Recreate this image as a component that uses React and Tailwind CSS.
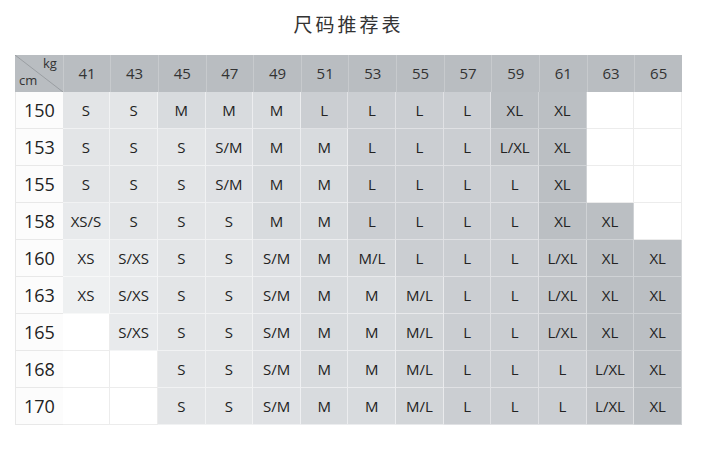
import React from "react";

const cols = [41, 43, 45, 47, 49, 51, 53, 55, 57, 59, 61, 63, 65];
const rows = [
  [150, ["S", "S", "M", "M", "M", "L", "L", "L", "L", "XL", "XL", "", ""]],
  [153, ["S", "S", "S", "S/M", "M", "M", "L", "L", "L", "L/XL", "XL", "", ""]],
  [155, ["S", "S", "S", "S/M", "M", "M", "L", "L", "L", "L", "XL", "", ""]],
  [158, ["XS/S", "S", "S", "S", "M", "M", "L", "L", "L", "L", "XL", "XL", ""]],
  [160, ["XS", "S/XS", "S", "S", "S/M", "M", "M/L", "L", "L", "L", "L/XL", "XL", "XL"]],
  [163, ["XS", "S/XS", "S", "S", "S/M", "M", "M", "M/L", "L", "L", "L/XL", "XL", "XL"]],
  [165, ["", "S/XS", "S", "S", "S/M", "M", "M", "M/L", "L", "L", "L/XL", "XL", "XL"]],
  [168, ["", "", "S", "S", "S/M", "M", "M", "M/L", "L", "L", "L", "L/XL", "XL"]],
  [170, ["", "", "S", "S", "S/M", "M", "M", "M/L", "L", "L", "L", "L/XL", "XL"]],
];

const bg = {
  "": "bg-white border-[#ececec]",
  XS: "bg-[#eef0f1] border-white/50",
  "XS/S": "bg-[#e8eaec] border-white/50",
  "S/XS": "bg-[#e8eaec] border-white/50",
  S: "bg-[#e3e5e7] border-white/50",
  "S/M": "bg-[#dfe1e4] border-white/50",
  M: "bg-[#d8dbde] border-white/50",
  "M/L": "bg-[#d2d5d8] border-white/50",
  L: "bg-[#cbced2] border-white/40",
  "L/XL": "bg-[#c3c6ca] border-white/40",
  XL: "bg-[#bbbfc3] border-white/30",
};

export default function App() {
  return (
    <div
      className="w-[724px] h-[473px] bg-white text-[#222]"
      style={{ fontFamily: '"Open Sans", "Noto Sans CJK SC", sans-serif' }}
    >
      <div
        className="pt-[12px] h-[55px] w-[697px] text-center text-[19px] leading-[24px] tracking-[3px] text-[#333]"
        style={{ fontFamily: '"Noto Sans CJK SC", sans-serif' }}
      >
        尺码推荐表
      </div>
      <div className="ml-[15px] w-[667px] grid grid-cols-[repeat(14,minmax(0,1fr))]">
        <div className="relative h-[37px] bg-[#b9bdc1]">
          <svg className="absolute inset-0" width="48" height="37" viewBox="0 0 48 37">
            <line x1="0" y1="0" x2="48" y2="37" stroke="#9a9ea2" strokeWidth="1" />
          </svg>
          <span className="absolute left-[28px] top-[1px] text-[13px] leading-[15px] text-[#333]">kg</span>
          <span className="absolute left-[4px] top-[18px] text-[13px] leading-[15px] text-[#333]">cm</span>
        </div>
        {cols.map((c) => (
          <div
            key={c}
            className="h-[37px] bg-[#b9bdc1] border-l border-white/20 flex items-center justify-center text-[15px] text-[#333]"
          >
            {c}
          </div>
        ))}
        {rows.map(([h, vals]) => (
          <React.Fragment key={h}>
            <div className="h-[37px] bg-[#fcfcfc] border-b border-l border-[#e8e8e8] flex items-center justify-center text-[18px] text-[#222]">
              {h}
            </div>
            {vals.map((v, i) => (
              <div
                key={i}
                className={`h-[37px] border-b border-r flex items-center justify-center text-[15px] text-[#222] ${bg[v]}`}
              >
                {v}
              </div>
            ))}
          </React.Fragment>
        ))}
      </div>
    </div>
  );
}
